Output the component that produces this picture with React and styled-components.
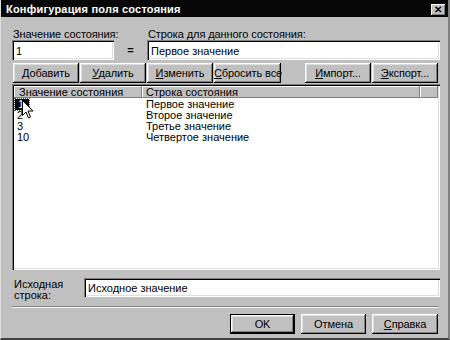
import React from 'react';
import styled, { createGlobalStyle } from 'styled-components';

const Global = createGlobalStyle`
  html, body { margin: 0; padding: 0; background: #c0c0c0; }
  body {
    font-family: "Liberation Sans", Arial, sans-serif;
    font-size: 11px;
    color: #000;
  }
`;

const Window = styled.div`
  position: relative;
  width: 450px;
  height: 340px;
  box-sizing: border-box;
  background: #c0c0c0;
  border-left: 1px solid #dfdfdf;
  border-right: 2px solid #808080;
  border-bottom: 2px solid #404040;
  display: flex;
  flex-direction: column;
`;

const TitleBar = styled.div`
  height: 17px;
  background: #070707;
  color: #fff;
  display: flex;
  align-items: center;
  justify-content: space-between;
  padding: 0 2px 0 5px;
  font-weight: bold;
  font-size: 11px;
  letter-spacing: 0.2px;
`;

const CloseBtn = styled.div`
  width: 15px;
  height: 12px;
  margin-top: 2px;
  background: #c0c0c0;
  box-shadow: inset -1px -1px #000, inset 1px 1px #fff, inset -2px -2px #808080;
  display: flex;
  align-items: center;
  justify-content: center;
  color: #000;
  font-size: 10px;
  font-weight: bold;
  line-height: 1;
`;

const Body = styled.div`
  flex: 1;
  display: flex;
  flex-direction: column;
  padding: 0 8px 0 11px;
`;

const TopGrid = styled.div`
  display: grid;
  grid-template-columns: 102px 33px 1fr;
  grid-template-rows: 13px 20px;
  margin-top: 10px;
  align-items: end;
`;

const Label = styled.div`
  padding-left: 1px;
  line-height: 12px;
  white-space: nowrap;
  letter-spacing: -0.1px;
`;

const Equals = styled.div`
  align-self: center;
  text-align: center;
  font-weight: bold;
`;

const Field = styled.div`
  height: ${p => p.$h || 20}px;
  box-sizing: border-box;
  background: #fff;
  box-shadow: inset 1px 1px #808080, inset 2px 2px #000, inset -1px -1px #fff, inset -2px -2px #dfdfdf;
  display: flex;
  align-items: center;
  padding: 1px 0 0 4px;
  white-space: nowrap;
  flex: ${p => (p.$grow ? 1 : 'none')};
`;

const ButtonRow = styled.div`
  display: flex;
  margin-top: 3px;
  padding-left: 1px;
`;

const Group = styled.div`
  display: flex;
  gap: ${p => p.$gap || 0}px;
  margin-left: ${p => p.$ml || 0}px;
`;

const Btn = styled.button`
  font-family: inherit;
  font-size: 11px;
  letter-spacing: -0.1px;
  white-space: nowrap;
  color: #000;
  width: ${p => p.$w || 66}px;
  height: ${p => p.$h || 20}px;
  padding: 0;
  background: #c0c0c0;
  border: ${p => (p.$default ? '1px solid #000' : 'none')};
  box-shadow: inset -1px -1px #000, inset 1px 1px #fff, inset -2px -2px #808080, inset 2px 2px #dfdfdf;
  u { text-decoration: underline; text-underline-offset: 1px; }
`;

const List = styled.div`
  margin-top: 1px;
  height: 186px;
  width: 428px;
  box-sizing: border-box;
  background: #fff;
  box-shadow: inset 1px 1px #808080, inset 2px 2px #000, inset -1px -1px #fff, inset -2px -2px #dfdfdf;
  padding: 2px;
  display: flex;
  flex-direction: column;
`;

const Header = styled.div`
  display: flex;
  height: 12px;
  background: #c0c0c0;
`;

const HeadCell = styled.div`
  width: ${p => p.$w}px;
  flex: ${p => (p.$w ? 'none' : 1)};
  box-sizing: border-box;
  box-shadow: inset -1px -1px #808080, inset 1px 1px #fff;
  padding-left: ${p => p.$pl || 4}px;
  line-height: 12px;
  white-space: nowrap;
  overflow: hidden;
`;

const Rows = styled.div`
  padding-top: 1px;
`;

const Row = styled.div`
  display: flex;
  height: 11px;
  line-height: 11px;
  color: #000;
`;

const Cell = styled.div`
  box-sizing: border-box;
  flex: none;
  width: ${p => (p.$w ? `${p.$w}px` : 'auto')};
  padding-left: ${p => p.$pl || 0}px;
  white-space: nowrap;
`;

const Selected = styled.span`
  display: inline-block;
  background: #000;
  color: #fff;
  padding: 0 5px 0 3px;
  margin-left: 1px;
  outline: 1px dotted #555;
`;

const BottomRow = styled.div`
  display: flex;
  align-items: flex-start;
  margin-top: 8px;
`;

const SideLabel = styled.div`
  width: 70px;
  padding-left: 2px;
  line-height: 11px;
  margin-top: 1px;
`;

const Separator = styled.div`
  margin-top: 5px;
  width: 426px;
  border-top: 1px solid #808080;
  border-bottom: 1px solid #fff;
`;

const Footer = styled.div`
  display: flex;
  justify-content: flex-end;
  gap: 6px;
  margin-top: 6px;
  padding-right: 2px;
`;

const Cursor = styled.svg`
  position: absolute;
  left: 21px;
  top: 100px;
`;

const rows = [
  ['2', 'Второе значение'],
  ['3', 'Третье значение'],
  ['10', 'Четвертое значение'],
];

export default function App() {
  return (
    <>
      <Global />
      <Window>
        <TitleBar>
          <span>Конфигурация поля состояния</span>
          <CloseBtn>✕</CloseBtn>
        </TitleBar>
        <Body>
          <TopGrid>
            <Label>Значение состояния:</Label>
            <div />
            <Label>Строка для данного состояния:</Label>
            <Field>1</Field>
            <Equals>=</Equals>
            <Field>Первое значение</Field>
          </TopGrid>

          <ButtonRow>
            <Group $gap={1}>
              <Btn><u>Д</u>обавить</Btn>
              <Btn><u>У</u>далить</Btn>
              <Btn><u>И</u>зменить</Btn>
              <Btn $w={67}><u>С</u>бросить все</Btn>
            </Group>
            <Group $gap={1} $ml={24}>
              <Btn><u>И</u>мпорт...</Btn>
              <Btn><u>Э</u>кспорт...</Btn>
            </Group>
          </ButtonRow>

          <List>
            <Header>
              <HeadCell $w={128} $pl={5}>Значение состояния</HeadCell>
              <HeadCell $w={278} $pl={4}>Строка состояния</HeadCell>
              <HeadCell />
            </Header>
            <Rows>
              <Row>
                <Cell $w={128}><Selected>1</Selected></Cell>
                <Cell $pl={4}>Первое значение</Cell>
              </Row>
              {rows.map(([v, s]) => (
                <Row key={v}>
                  <Cell $w={128} $pl={3}>{v}</Cell>
                  <Cell $pl={4}>{s}</Cell>
                </Row>
              ))}
            </Rows>
          </List>

          <BottomRow>
            <SideLabel>Исходная<br />строка:</SideLabel>
            <Field $grow $h={19}>Исходное значение</Field>
          </BottomRow>

          <Separator />

          <Footer>
            <Btn $default $w={65}>OK</Btn>
            <Btn $w={65}>Отмена</Btn>
            <Btn $w={66}><u>С</u>правка</Btn>
          </Footer>
        </Body>

        <Cursor width="12" height="19" viewBox="0 0 12 19">
          <path d="M0.5 0.5 L0.5 15.5 L4 12 L6.5 18 L8.5 17 L6 11 L11 11 Z" fill="#fff" stroke="#000" strokeWidth="1" />
        </Cursor>
      </Window>
    </>
  );
}
